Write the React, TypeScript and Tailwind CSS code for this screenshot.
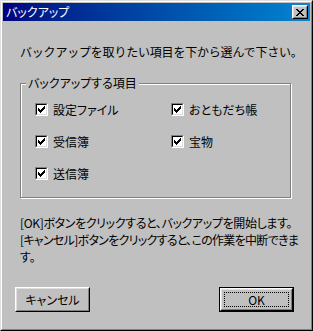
import React from "react";

const font: React.CSSProperties = {
  fontFamily: '"Noto Sans CJK JP", "Noto Sans", sans-serif',
  fontFeatureSettings: '"palt"',
};

function Check() {
  const px = [
    [6, 0],
    [5, 1], [6, 1],
    [0, 2], [4, 2], [5, 2], [6, 2],
    [0, 3], [1, 3], [3, 3], [4, 3], [5, 3],
    [0, 4], [1, 4], [2, 4], [3, 4], [4, 4],
    [1, 5], [2, 5], [3, 5],
    [2, 6],
  ];
  return (
    <svg width="7" height="7" viewBox="0 0 7 7" shapeRendering="crispEdges">
      {px.map(([x, y], i) => (
        <rect key={i} x={x} y={y} width="1" height="1" fill="#000" />
      ))}
    </svg>
  );
}

function CloseX() {
  const rows = [
    "xx....xx",
    ".xx..xx.",
    "..xxxx..",
    "...xx...",
    "..xxxx..",
    ".xx..xx.",
    "xx....xx",
  ];
  return (
    <svg width="8" height="7" viewBox="0 0 8 7" shapeRendering="crispEdges">
      {rows.flatMap((r, y) =>
        r.split("").map((c, x) =>
          c === "x" ? <rect key={`${x}-${y}`} x={x} y={y} width="1" height="1" fill="#000" /> : null
        )
      )}
    </svg>
  );
}

function CheckBox({ label }: { label: string }) {
  return (
    <div className="flex items-center h-[13px] gap-[5px]">
      <div className="w-[13px] h-[13px] border border-t-[#808080] border-l-[#808080] border-b-white border-r-white">
        <div className="w-[11px] h-[11px] bg-white border border-t-black border-l-black border-b-[#dfdfdf] border-r-[#dfdfdf] flex items-center justify-center">
          <Check />
        </div>
      </div>
      <span className="text-[12px] leading-[12px] text-black whitespace-nowrap">{label}</span>
    </div>
  );
}

function Button({ label, def }: { label: string; def?: boolean }) {
  const inner = (
    <div className="w-full h-full border border-t-white border-l-white border-b-black border-r-black">
      <div className="w-full h-full border border-t-[#dfdfdf] border-l-[#dfdfdf] border-b-[#808080] border-r-[#808080] flex items-center justify-center">
        {def ? (
          <div className="w-[65px] h-[15px] border border-dotted border-black flex items-center justify-center text-[12px] leading-[12px]">
            {label}
          </div>
        ) : (
          <span className="text-[12px] leading-[12px]">{label}</span>
        )}
      </div>
    </div>
  );
  return def ? (
    <div className="w-[75px] h-[25px] border border-black">{inner}</div>
  ) : (
    <div className="w-[75px] h-[25px]">{inner}</div>
  );
}

export default function App() {
  return (
    <div style={font} className="w-[313px] h-[331px] bg-[#c0c0c0] text-black">
      <div className="w-full h-full border border-t-[#dfdfdf] border-l-[#dfdfdf] border-b-black border-r-black">
        <div className="w-full h-full border border-t-white border-l-white border-b-[#808080] border-r-[#808080] p-px flex flex-col">
          <div className="h-[18px] bg-gradient-to-r from-[#000080] to-[#1084d0] flex items-center pl-[3px] pr-[2px]">
            <span className="text-white text-[12px] leading-[12px] flex-1">バックアップ</span>
            <div className="w-[16px] h-[14px] bg-[#c0c0c0] border border-t-white border-l-white border-b-black border-r-black">
              <div className="w-full h-full border border-t-[#dfdfdf] border-l-[#dfdfdf] border-b-[#808080] border-r-[#808080] flex items-center justify-center">
                <CloseX />
              </div>
            </div>
          </div>
          <div className="flex flex-col pl-[17px]">
            <div
              className="mt-[25px] text-[12px] leading-[12px] whitespace-nowrap tracking-[-0.2px]"
              style={{ fontFeatureSettings: "normal" }}
            >
              バックアップを取りたい項目を下から選んで下さい。
            </div>
            <div className="relative mt-[25px] w-[271px] h-[115px] border border-[#808080] shadow-[inset_1px_1px_#ffffff,1px_1px_#ffffff]">
              <span className="absolute left-[5px] top-[-7px] px-[2px] bg-[#c0c0c0] text-[12px] leading-[12px] whitespace-nowrap">
                バックアップする項目
              </span>
              <div className="grid grid-cols-[136px_auto] gap-y-[19px] pl-[14px] pt-[19px]">
                <CheckBox label="設定ファイル" />
                <CheckBox label="おともだち帳" />
                <CheckBox label="受信簿" />
                <CheckBox label="宝物" />
                <CheckBox label="送信簿" />
              </div>
            </div>
            <div className="mt-[16px] text-[12px] leading-[17px] whitespace-nowrap">
              <div className="tracking-[-0.35px]">[OK]ボタンをクリックすると、バックアップを開始します。</div>
              <div className="tracking-[-0.7px]">[キャンセル]ボタンをクリックすると、この作業を中断できま</div>
              <div>す。</div>
            </div>
          </div>
          <div className="mt-[22px] flex justify-between pl-[12px] pr-[16px]">
            <Button label="キャンセル" />
            <Button label="OK" def />
          </div>
        </div>
      </div>
    </div>
  );
}
